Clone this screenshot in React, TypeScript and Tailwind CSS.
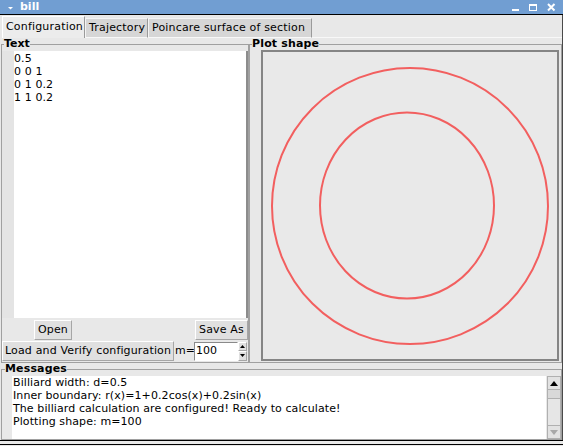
import React from "react";

const tabs = [
  { label: "Configuration", w: "w-[83px]" },
  { label: "Trajectory", w: "w-[63px]" },
  { label: "Poincare surface of section", w: "w-[164px]" },
];

const configLines = ["0.5", "0 0 1", "0 1 0.2", "1 1 0.2"];

const messages = [
  "Billiard width: d=0.5",
  "Inner boundary: r(x)=1+0.2cos(x)+0.2sin(x)",
  "The billiard calculation are configured! Ready to calculate!",
  "Plotting shape: m=100",
];

function TitleBar() {
  return (
    <div className="flex h-[15px] items-center border-b border-black bg-[#719ed2] text-white">
      <svg width="20" height="14" viewBox="0 0 20 14" className="shrink-0">
        <path d="M8 7 L13 7 L10.5 9.5 Z" fill="#fff" />
      </svg>
      <span className="text-[11px] font-bold leading-[14px]">bill</span>
      <div className="ml-auto flex items-center">
        {/* minimize */}
        <svg width="18" height="14" viewBox="0 0 18 14">
          <rect x="1" y="9" width="7" height="2" fill="#fff" />
        </svg>
        {/* maximize */}
        <svg width="18" height="14" viewBox="0 0 18 14">
          <rect x="0.5" y="4.5" width="7" height="6" fill="none" stroke="#fff" />
          <rect x="0" y="4" width="8" height="2" fill="#fff" />
        </svg>
        {/* close */}
        <svg width="12" height="14" viewBox="0 0 12 14" className="mr-[4px]">
          <path d="M1 4 L7.5 10.5 M7.5 4 L1 10.5" stroke="#fff" strokeWidth="2" />
        </svg>
      </div>
    </div>
  );
}

function Tabs() {
  return (
    <div className="flex h-[23px] items-end pl-[2px] tracking-[0.18px]">
      {tabs.map((t, i) =>
        i === 0 ? (
          <div
            key={t.label}
            className={`flex h-[22px] ${t.w} items-center border-l border-t border-r border-l-white border-t-white border-r-[#9a9a9a] bg-[#ececec] pl-[3px]`}
          >
            {t.label}
          </div>
        ) : (
          <div
            key={t.label}
            className={`flex h-[20px] ${t.w} items-center border border-l-[#f4f4f4] border-t-[#f4f4f4] border-r-[#9a9a9a] border-b-[#f8f8f8] bg-[#d6d6d6] pl-[3px]`}
          >
            {t.label}
          </div>
        ),
      )}
      <div className="h-[1px] flex-1 bg-[#f8f8f8]" />
    </div>
  );
}

function RaisedButton({ children, className = "" }: { children: React.ReactNode; className?: string }) {
  return (
    <button
      type="button"
      className={`flex h-[20px] items-center border border-t-white border-l-white border-b-[#a6a6a6] border-r-[#a6a6a6] bg-[#e0e0e0] tracking-[0.15px] ${className}`}
    >
      {children}
    </button>
  );
}

function ConfigPanel() {
  return (
    <fieldset className="ml-[1px] h-[325px] w-[248px] border border-[#a0a0a0]">
      <legend className="ml-[2px] text-[11px] font-bold leading-[12px]">Text</legend>
      <div className="flex flex-col pt-[1px]">
        <div className="flex h-[267px]">
          <div className="w-[12px] bg-[#e4e4e4]" />
          <div className="flex-1 border-r-2 border-[#8c8c8c] bg-white pt-[1px] leading-[13px] tracking-[0.1px]">
            {configLines.map((l) => (
              <div key={l}>{l}</div>
            ))}
          </div>
        </div>
        <div className="mt-[2px] flex h-[20px] justify-between pl-[32px]">
          <RaisedButton className="w-[38px] justify-center">Open</RaisedButton>
          <RaisedButton className="w-[53px] justify-center">Save As</RaisedButton>
        </div>
        <div className="mt-[1px] flex h-[20px] items-center">
          <RaisedButton className="w-[172px] pl-[2px]">Load and Verify configuration</RaisedButton>
          <span className="w-[20px] pl-[1px]">m=</span>
          <div className="flex h-[19px] w-[44px] items-center border border-t-[#8a8a8a] border-l-[#8a8a8a] border-b-white border-r-white bg-white pl-[1px]">
            100
          </div>
          <div className="flex h-[19px] w-[9px] flex-col">
            <div className="flex flex-1 items-center justify-center border border-t-white border-l-white border-b-[#a6a6a6] border-r-[#a6a6a6] bg-[#e0e0e0]">
              <svg width="5" height="3" viewBox="0 0 5 3">
                <path d="M0 3 L2.5 0 L5 3 Z" fill="#000" />
              </svg>
            </div>
            <div className="flex flex-1 items-center justify-center border border-t-white border-l-white border-b-[#a6a6a6] border-r-[#a6a6a6] bg-[#e0e0e0]">
              <svg width="5" height="3" viewBox="0 0 5 3">
                <path d="M0 0 L2.5 3 L5 0 Z" fill="#000" />
              </svg>
            </div>
          </div>
        </div>
      </div>
    </fieldset>
  );
}

function PlotPanel() {
  // inner boundary r(x)=1+0.2cos(x)+0.2sin(x), drawn as a near circle
  return (
    <fieldset className="h-[325px] w-[313px] border border-[#a0a0a0]">
      <legend className="ml-[2px] text-[11px] font-bold leading-[12px] tracking-[0.15px]">Plot shape</legend>
      <div className="pl-[11px]">
        <div className="h-[311px] w-[298px] border-2 border-[#858585] bg-[#e9e9e9]">
          <svg width="294" height="307" viewBox="0 0 294 307">
            <circle cx="147" cy="154" r="138" fill="none" stroke="#f25f5f" strokeWidth="2" />
            <ellipse cx="144" cy="153.5" rx="87" ry="93" fill="none" stroke="#f25f5f" strokeWidth="2" />
          </svg>
        </div>
      </div>
    </fieldset>
  );
}

function MessagesPanel() {
  return (
    <fieldset className="ml-[1px] h-[77px] w-[561px] border border-[#a0a0a0]">
      <legend className="ml-[3px] text-[11px] font-bold leading-[12px] tracking-[0.15px]">Messages</legend>
      <div className="flex h-[64px] pl-[10px] pt-[1px]">
        <div className="w-[534px] bg-white pl-[1px] leading-[13px] tracking-[0.09px]">
          {messages.map((m) => (
            <div key={m} className="whitespace-pre">
              {m}
            </div>
          ))}
        </div>
        <div className="ml-[1px] flex w-[14px] flex-col border border-[#b0b0b0] bg-[#e6e6e6]">
          <div className="flex h-[13px] items-center justify-center border-b border-[#b0b0b0] bg-[#e2e2e2]">
            <svg width="8" height="5" viewBox="0 0 8 5">
              <path d="M0 5 L4 0 L8 5 Z" fill="#000" />
            </svg>
          </div>
          <div className="h-[9px] border-b border-[#b0b0b0] bg-[#d9d9d9]" />
          <div className="flex-1" />
          <div className="flex h-[13px] items-center justify-center border-t border-[#b0b0b0] bg-[#e2e2e2]">
            <svg width="8" height="5" viewBox="0 0 8 5">
              <path d="M0 0 L4 5 L8 0 Z" fill="#a8a8a8" />
            </svg>
          </div>
        </div>
      </div>
    </fieldset>
  );
}

export default function App() {
  return (
    <div className="h-[446px] w-[563px] overflow-hidden bg-[#e8e8e8] font-['DejaVu_Sans',sans-serif] text-[11px] text-black">
      <TitleBar />
      <div className="border-r border-[#4a4a4a]">
        <Tabs />
        <div className="flex">
          <ConfigPanel />
          <PlotPanel />
        </div>
        <MessagesPanel />
      </div>
      <div className="h-[5px] border-y border-black" />
    </div>
  );
}
